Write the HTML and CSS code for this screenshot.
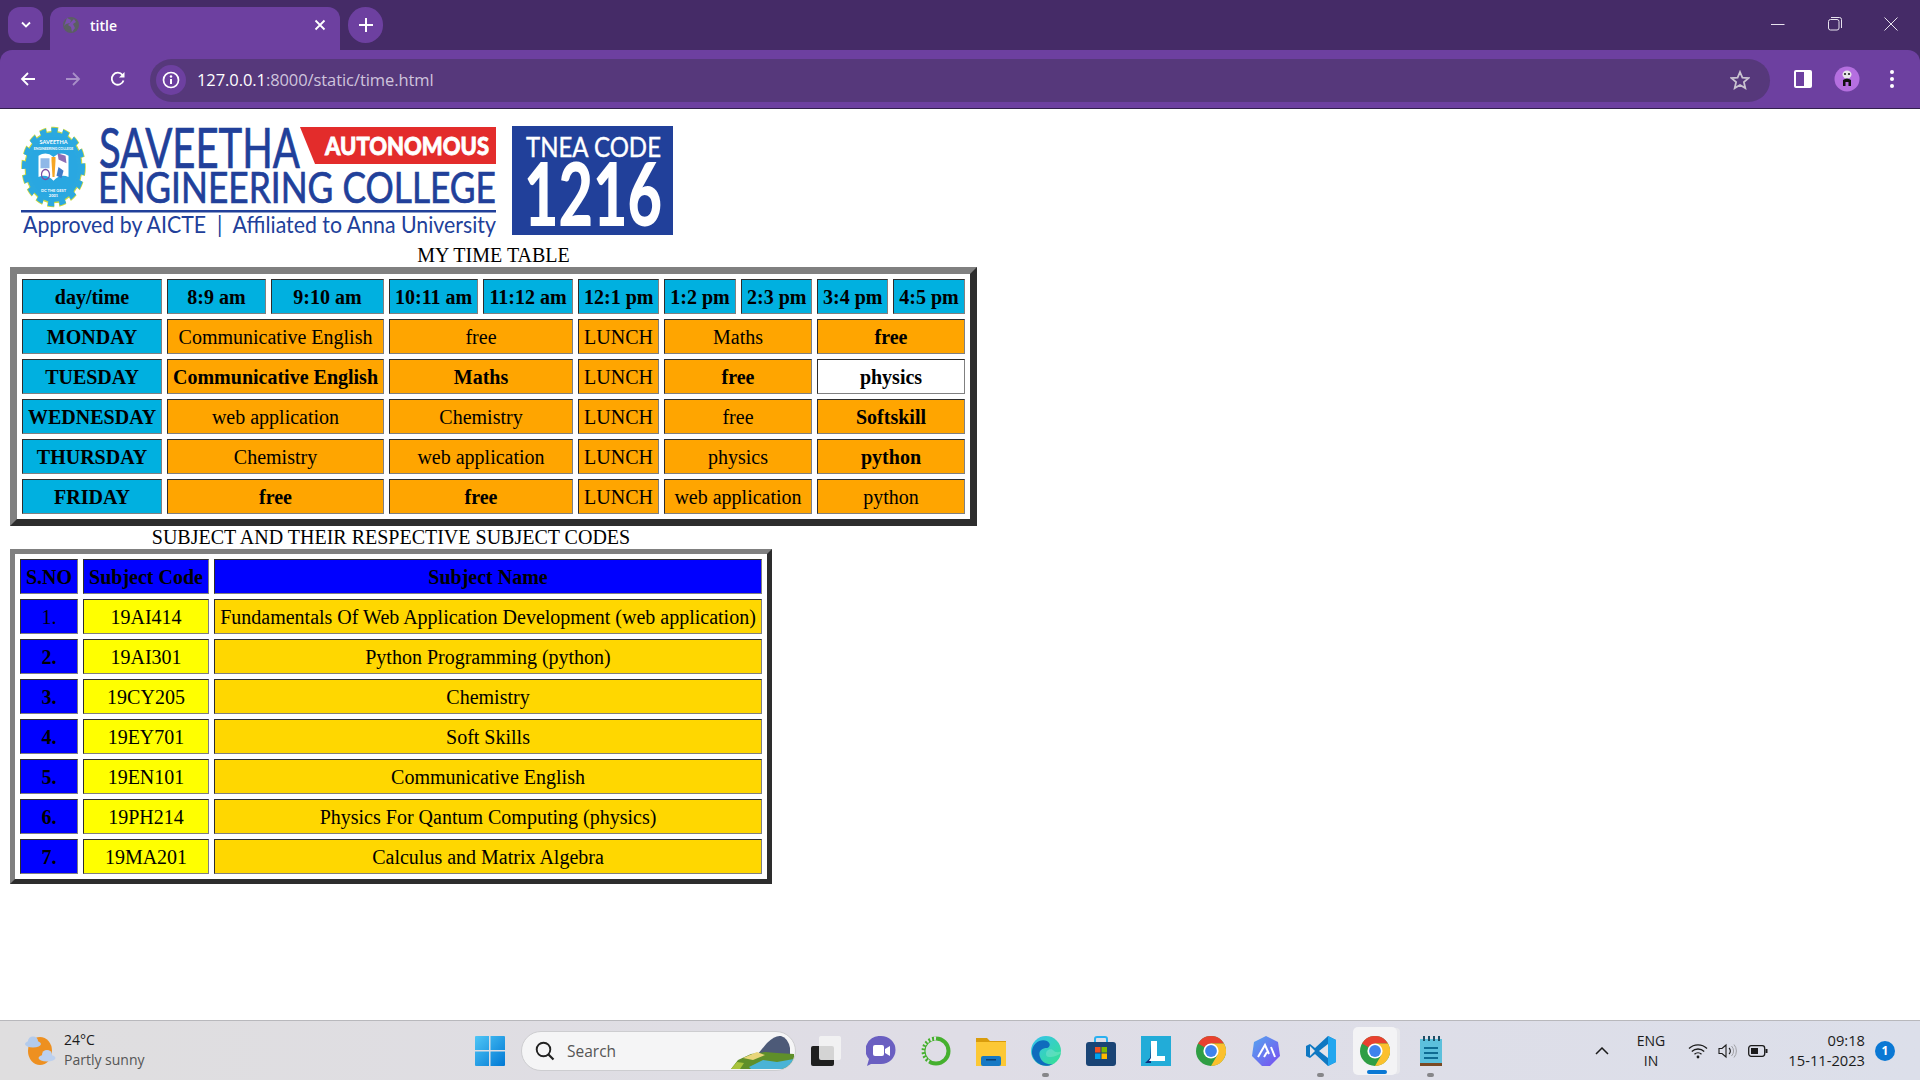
FILE: index.html
```html
<!DOCTYPE html>
<html lang="en">
<head>
<meta charset="utf-8">
<title>title</title>
<link rel="stylesheet" href="styles.css">
</head>
<body>
<svg class="defs" width="0" height="0" aria-hidden="true">
  <symbol id="chrome" viewBox="0 0 30 30">
    <circle cx="15" cy="15" r="15" fill="#2f9e44"/>
    <path d="M2 7.5A15 15 0 0 1 28 7.5L15 7.5 8.5 11.2Z" fill="#e8412f"/>
    <path d="M28 7.5A15 15 0 0 1 15 30L21.5 18.7 15 7.5Z" fill="#fbc02d"/>
    <circle cx="15" cy="15" r="7.6" fill="#fff"/>
    <circle cx="15" cy="15" r="5.9" fill="#3f82ec"/>
  </symbol>
</svg>
<div class="screen">
  <header class="browser">
    <div class="tabstrip">
      <div class="tab-search"><svg width="12" height="8" viewBox="0 0 12 8"><path d="M2 1.5l4 4 4-4" fill="none" stroke="#fff" stroke-width="1.8"/></svg></div>
      <div class="tab">
        <svg class="favicon" width="18" height="18" viewBox="0 0 18 18"><circle cx="9" cy="9" r="8" fill="#5b5e63"/><path d="M5 2l4 2-1 3-4 1-2 2M12 3l2 3-3 2 2 4-3 4-1-5-3-2" fill="#7a4fae"/></svg>
        <span class="tab-title">title</span>
        <svg class="tab-close" width="12" height="12" viewBox="0 0 12 12"><path d="M1.5 1.5l9 9M10.500 1.500l-9 9" stroke="#fff" stroke-width="1.8"/></svg>
      </div>
      <div class="new-tab"><svg width="14" height="14" viewBox="0 0 14 14"><path d="M7 0v14M0 7h14" stroke="#fff" stroke-width="2"/></svg></div>
      <div class="win-controls">
        <svg width="14" height="14" viewBox="0 0 14 14"><path d="M0 7.500h13.500" stroke="#e8e3ee" stroke-width="1"/></svg>
        <svg width="14" height="14" viewBox="0 0 14 14"><rect x=".5" y="2.500" width="10.500" height="10.500" rx="2" fill="none" stroke="#e8e3ee"/><path d="M3 .5h8.500a2 2 0 0 1 2 2V11" fill="none" stroke="#e8e3ee"/></svg>
        <svg width="14" height="14" viewBox="0 0 14 14"><path d="M.5.5l13 13M13.500.5l-13 13" stroke="#e8e3ee" stroke-width="1"/></svg>
      </div>
    </div>
    <div class="toolbar">
      <div class="nav-buttons">
        <svg width="16" height="16" viewBox="0 0 16 16"><path d="M15 8H2M8 2L2 8l6 6" fill="none" stroke="#fff" stroke-width="1.800"/></svg>
        <svg width="16" height="16" viewBox="0 0 16 16"><path d="M1 8h13M8 2l6 6-6 6" fill="none" stroke="#a98fc8" stroke-width="1.800"/></svg>
        <svg width="16" height="16" viewBox="0 0 16 16"><path d="M13.500 9.500A6 6 0 1 1 12.500 4" fill="none" stroke="#fff" stroke-width="1.800"/><path d="M14.500 1v5.500H9z" fill="#fff"/></svg>
      </div>
      <div class="omnibox">
        <span class="site-info"><svg width="18" height="18" viewBox="0 0 18 18"><circle cx="9" cy="9" r="7.500" fill="none" stroke="#fff" stroke-width="1.700"/><path d="M9 8v5" stroke="#fff" stroke-width="2"/><circle cx="9" cy="5.500" r="1.200" fill="#fff"/></svg></span>
        <span class="url"><span class="url-host">127.0.0.1</span>:8000/static/time.html</span>
        <svg class="star" width="20" height="20" viewBox="0 0 20 20"><path d="M10 2l2.400 5.600 6.100.5-4.600 4 1.400 6L10 15l-5.300 3.100 1.400-6-4.600-4 6.100-.5z" fill="none" stroke="#c9c3d0" stroke-width="1.800"/></svg>
      </div>
      <div class="tool-icons">
        <svg width="20" height="20" viewBox="0 0 20 20"><rect x="1" y="1" width="18" height="18" rx="2" fill="#fff"/><rect x="3" y="3" width="8" height="14" fill="#6d40a0"/></svg>
        <svg width="26" height="26" viewBox="0 0 26 26"><circle cx="13" cy="13" r="12.500" fill="#b56fe0"/><ellipse cx="13" cy="8.500" rx="4.500" ry="4" fill="#e8e8e8"/><circle cx="11" cy="8" r="1.100" fill="#222"/><circle cx="15" cy="8" r="1.100" fill="#222"/><path d="M9 20v-6q4-3 8 0v6h-2.500v-4h-3v4z" fill="#111"/></svg>
        <svg width="6" height="20" viewBox="0 0 6 20"><circle cx="3" cy="3" r="2" fill="#fff"/><circle cx="3" cy="10" r="2" fill="#fff"/><circle cx="3" cy="17" r="2" fill="#fff"/></svg>
      </div>
    </div>
  </header>

  <main class="page">
    <svg class="logo" width="670" height="125" viewBox="10 119 670 125" role="img" aria-label="Saveetha Engineering College">
      <g transform="translate(53.500 167) scale(1 1.250)">
        <circle r="28.500" fill="none" stroke="#c9d83f" stroke-width="7.500" stroke-dasharray="6.500 4.500"/>
        <circle r="28.500" fill="#2ba8e0" stroke="#c9d83f" stroke-width="1"/>
        <circle r="28.500" fill="none" stroke="#2ba8e0" stroke-width="6" stroke-dasharray="6 5"/>
        <circle r="24" fill="#29a7e1"/>
        <path d="M-15-9q8-4 15 1q7-5 15-1V8q-8-3-15 3q-7-6-15-3z" fill="#fff"/>
        <path d="M-13-7h9v8h-9z" fill="#8fb8e8"/>
        <circle cx="-8" cy="6" r="4" fill="none" stroke="#7b4fa3" stroke-width="1.200"/>
        <path d="M5 0l5 3-2 6-5-2z" fill="#3f79c6"/>
        <path d="M4-11l8 2 1 6-8-3z" fill="#8d6fb5"/>
        <path d="M-2-8h4v3l-1 13h-2l-1-13z" fill="#f5a623"/>
      </g>
      <text class="logo-tiny" x="53.500" y="144" text-anchor="middle" font-size="5.500">SAVEETHA</text>
      <text class="logo-tiny" x="53.500" y="150" text-anchor="middle" font-size="3.500">ENGINEERING COLLEGE</text>
      <text class="logo-tiny" x="53.500" y="192" text-anchor="middle" font-size="4">DC THE GEST</text>
      <text class="logo-tiny" x="53.500" y="197" text-anchor="middle" font-size="4">2001</text>
      <text class="logo-blue" x="99" y="168" font-size="56" textLength="201" lengthAdjust="spacingAndGlyphs">SAVEETHA</text>
      <polygon points="300,127 496,127 496,164 315,164" fill="#e32c2b"/>
      <text class="logo-auto" x="325" y="155" font-size="25" textLength="164" lengthAdjust="spacingAndGlyphs">AUTONOMOUS</text>
      <text class="logo-blue" x="98" y="203" font-size="42" textLength="398" lengthAdjust="spacingAndGlyphs">ENGINEERING COLLEGE</text>
      <rect x="21" y="210" width="475" height="2.500" fill="#21409a"/>
      <text class="logo-blue-thin" x="23" y="233" font-size="23" textLength="473" lengthAdjust="spacingAndGlyphs">Approved by AICTE  |  Affiliated to Anna University</text>
      <rect x="512" y="126" width="161" height="109" fill="#21409a"/>
      <text class="logo-white" x="526" y="157" font-size="27" textLength="135" lengthAdjust="spacingAndGlyphs">TNEA CODE</text>
      <text class="logo-white-heavy" x="524" y="226" font-size="87" textLength="138" lengthAdjust="spacingAndGlyphs">1216</text>
    </svg>

    <table class="grid timetable">
      <caption>MY TIME TABLE</caption>
      <colgroup>
        <col class="t1"><col class="t2"><col class="t3"><col class="t4"><col class="t5"><col class="t6"><col class="t7"><col class="t8"><col class="t9"><col class="t10">
      </colgroup>
      <tr class="sky-row"><th>day/time</th><th>8:9 am</th><th>9:10 am</th><th>10:11 am</th><th>11:12 am</th><th>12:1 pm</th><th>1:2 pm</th><th>2:3 pm</th><th>3:4 pm</th><th>4:5 pm</th></tr>
      <tr><th class="sky">MONDAY</th><td class="orange" colspan="2">Communicative English</td><td class="orange" colspan="2">free</td><td class="orange">LUNCH</td><td class="orange" colspan="2">Maths</td><th class="orange" colspan="2">free</th></tr>
      <tr><th class="sky">TUESDAY</th><th class="orange" colspan="2">Communicative English</th><th class="orange" colspan="2">Maths</th><td class="orange">LUNCH</td><th class="orange" colspan="2">free</th><th colspan="2">physics</th></tr>
      <tr><th class="sky">WEDNESDAY</th><td class="orange" colspan="2">web application</td><td class="orange" colspan="2">Chemistry</td><td class="orange">LUNCH</td><td class="orange" colspan="2">free</td><th class="orange" colspan="2">Softskill</th></tr>
      <tr><th class="sky">THURSDAY</th><td class="orange" colspan="2">Chemistry</td><td class="orange" colspan="2">web application</td><td class="orange">LUNCH</td><td class="orange" colspan="2">physics</td><th class="orange" colspan="2">python</th></tr>
      <tr><th class="sky">FRIDAY</th><th class="orange" colspan="2">free</th><th class="orange" colspan="2">free</th><td class="orange">LUNCH</td><td class="orange" colspan="2">web application</td><td class="orange" colspan="2">python</td></tr>
    </table>

    <table class="grid subjects">
      <caption>SUBJECT AND THEIR RESPECTIVE SUBJECT CODES</caption>
      <colgroup><col class="s1"><col class="s2"><col class="s3"></colgroup>
      <tr class="blue-row"><th>S.NO</th><th>Subject Code</th><th>Subject Name</th></tr>
      <tr><td class="blue">1.</td><td class="yellow">19AI414</td><td class="gold">Fundamentals Of Web Application Development (web application)</td></tr>
      <tr><th class="blue">2.</th><td class="yellow">19AI301</td><td class="gold">Python Programming (python)</td></tr>
      <tr><th class="blue">3.</th><td class="yellow">19CY205</td><td class="gold">Chemistry</td></tr>
      <tr><th class="blue">4.</th><td class="yellow">19EY701</td><td class="gold">Soft Skills</td></tr>
      <tr><th class="blue">5.</th><td class="yellow">19EN101</td><td class="gold">Communicative English</td></tr>
      <tr><th class="blue">6.</th><td class="yellow">19PH214</td><td class="gold">Physics For Qantum Computing (physics)</td></tr>
      <tr><th class="blue">7.</th><td class="yellow">19MA201</td><td class="gold">Calculus and Matrix Algebra</td></tr>
    </table>
  </main>

  <footer class="taskbar">
    <div class="weather">
      <svg width="34" height="30" viewBox="0 0 34 30"><ellipse cx="17" cy="15" rx="12" ry="14" fill="#ee9020"/><g fill="#b3cbec"><ellipse cx="10" cy="8" rx="8" ry="3.500"/><ellipse cx="10" cy="5" rx="5" ry="4.500"/></g><g fill="#bcd0ee"><ellipse cx="24" cy="22" rx="8.500" ry="3.500"/><ellipse cx="24" cy="18.500" rx="5" ry="4.500"/></g></svg>
      <div class="weather-text"><div class="temp">24°C</div><div class="cond">Partly sunny</div></div>
    </div>
    <div class="start">
      <svg width="30" height="30" viewBox="0 0 30 30"><defs><linearGradient id="win" x1="0" y1="0" x2="1" y2="1"><stop offset="0" stop-color="#4fc6f6"/><stop offset="1" stop-color="#0078d4"/></linearGradient></defs><path d="M0 1a1 1 0 0 1 1-1h13v14H0zM15.500 0H29a1 1 0 0 1 1 1v13H15.500zM0 15.500h14V30H1a1 1 0 0 1-1-1zM15.500 15.500H30V29a1 1 0 0 1-1 1H15.500z" fill="url(#win)"/></svg>
    </div>
    <div class="searchbox">
      <svg width="20" height="20" viewBox="0 0 20 20"><circle cx="8.500" cy="8.500" r="6.800" fill="none" stroke="#222" stroke-width="1.900"/><path d="M13.500 13.500l5 5" stroke="#222" stroke-width="2.200"/></svg>
      <span class="search-text">Search</span>
      <svg class="landscape" width="66" height="40" viewBox="0 0 66 40"><path d="M28 24L38 12q8-8 14-7 7 2 9 12v9z" fill="#4d5a78"/><path d="M2 38l7-9 13-6 14-2 12 1 17 1v15z" fill="#5f8f2a"/><path d="M14 27l14-6 8 3-12 5z" fill="#e8d57a"/><path d="M20 36l14-7 14 2 17-3v10H22z" fill="#49b3d6"/><path d="M2 38l6-7 7 1-4 6z" fill="#a9c33d"/></svg>
    </div>
    <div class="apps">
      <div class="app"><svg width="30" height="30" viewBox="0 0 30 30"><rect x="0" y="10" width="23" height="20" rx="2" fill="#1f1f1f"/><rect x="8" y="0" width="22" height="24" rx="2" fill="#f4f4f4" fill-opacity=".85"/></svg></div>
      <div class="app"><svg width="30" height="30" viewBox="0 0 30 30"><path d="M15 0a14.500 14 0 0 1 0 28H5l-4 2 2-7A14.500 14 0 0 1 15 0z" fill="#6a5fc1"/><rect x="7" y="9" width="11" height="11" rx="2" fill="#fff"/><path d="M19 13l5-3v10l-5-3z" fill="#fff"/></svg></div>
      <div class="app"><svg width="30" height="30" viewBox="0 0 30 30"><circle cx="15" cy="15" r="12.500" fill="none" stroke="#45b02e" stroke-width="4"/><path d="M15 2.500A12.500 12.500 0 0 0 8 26" fill="none" stroke="#e0e0e4" stroke-width="4" stroke-dasharray="2 2"/></svg></div>
      <div class="app"><svg width="30" height="30" viewBox="0 0 30 30"><path d="M0 2h11l3 3h16v8H0z" fill="#d99c0c"/><rect y="6" width="30" height="24" fill="#fcc835"/><rect x="5" y="20" width="20" height="10" rx="2" fill="#1679c4"/><rect x="10" y="23" width="10" height="1.500" fill="#0b3f70"/></svg></div>
      <div class="app has-dot"><svg width="30" height="30" viewBox="0 0 30 30"><defs><linearGradient id="edge" x1="0" y1="0" x2="1" y2="1"><stop offset="0" stop-color="#35c1f1"/><stop offset="1" stop-color="#36e28e"/></linearGradient></defs><circle cx="15" cy="15" r="15" fill="url(#edge)"/><path d="M1 18C0 7 10 2 16 5c5 3 2 7 0 7-6 0-9 4-7 9 2 6 8 8 13 7-9 5-19-1-21-10z" fill="#0f6cbd"/><path d="M15 18c0-5 6-6 8-3 2 2 7 1 7 0 0 4-7 6-12 6-2 0-3-1-3-3z" fill="#fff" fill-opacity=".18"/></svg></div>
      <div class="app"><svg width="30" height="30" viewBox="0 0 30 30"><path d="M9 6V3a2 2 0 0 1 2-2h8a2 2 0 0 1 2 2v3" fill="none" stroke="#2ab0f0" stroke-width="2"/><rect y="6" width="30" height="24" rx="3" fill="#1a4475"/><rect x="9" y="11" width="5.500" height="5.500" fill="#f25022"/><rect x="15.500" y="11" width="5.500" height="5.500" fill="#7fba00"/><rect x="9" y="17.500" width="5.500" height="5.500" fill="#00a4ef"/><rect x="15.500" y="17.500" width="5.500" height="5.500" fill="#ffb900"/></svg></div>
      <div class="app"><svg width="30" height="30" viewBox="0 0 30 30"><rect width="30" height="30" fill="#22acd8"/><path d="M9 8v14L4 27h6z" fill="#0d2f7a"/><path d="M10 5h6v15h8v5H8l2-3z" fill="#fff"/></svg></div>
      <div class="app"><svg width="30" height="30"><use href="#chrome"/></svg></div>
      <div class="app"><svg width="30" height="30" viewBox="0 0 30 30"><defs><linearGradient id="hex" x1="0" y1="0" x2="1" y2="1"><stop offset="0" stop-color="#54a8ef"/><stop offset="1" stop-color="#7a4cf0"/></linearGradient></defs><path d="M15 0l12 6 2 14-10 10h-8L1 20 3 6z" fill="url(#hex)"/><path d="M7 21L14 9l4 9M13 21l3-5M20 11l4 10" fill="none" stroke="#fff" stroke-width="2"/></svg></div>
      <div class="app has-dot"><svg width="30" height="30" viewBox="0 0 30 30"><path d="M22 0l8 4v22l-8 4-13-12-5 4-4-2v-10l4-2 5 4z" fill="#0f78c2"/><path d="M22 0l8 4v22l-8 4z" fill="#22a6ef"/><path d="M22 8v14l-9-7z" fill="#e4e4ea"/><path d="M4 10v10l5-5z" fill="#e4e4ea"/></svg></div>
      <div class="app active"><svg width="30" height="30"><use href="#chrome"/></svg></div>
      <div class="app has-dot"><svg width="30" height="30" viewBox="0 0 30 30"><rect y="3" x="4" width="22" height="24" fill="#5cc0dc"/><rect y="27" x="4" width="22" height="3" fill="#7b4a24"/><path d="M8 12h14M8 17h14M8 22h14" stroke="#0e6c93" stroke-width="2"/><path d="M8 0v5M13 0v5M18 0v5M23 0v5" stroke="#1a4e66" stroke-width="2"/></svg></div>
    </div>
    <div class="tray">
      <svg class="chevron" width="14" height="8" viewBox="0 0 14 8"><path d="M1 7l6-6 6 6" fill="none" stroke="#1b1b1b" stroke-width="1.500"/></svg>
      <div class="lang"><div>ENG</div><div>IN</div></div>
      <div class="status">
        <svg width="20" height="16" viewBox="0 0 20 16"><path d="M1 5.500a13 13 0 0 1 18 0M3.800 8.500a9 9 0 0 1 12.400 0M6.500 11.300a5 5 0 0 1 7 0" fill="none" stroke="#1b1b1b" stroke-width="1.300"/><circle cx="10" cy="14" r="1.400" fill="#1b1b1b"/></svg>
        <svg width="20" height="16" viewBox="0 0 20 16"><path d="M1 5.500h3l4-3.500v12l-4-3.500H1z" fill="none" stroke="#1b1b1b" stroke-width="1.100"/><path d="M11 5a4 4 0 0 1 0 6" fill="none" stroke="#1b1b1b" stroke-width="1.100"/><path d="M13.500 3a7 7 0 0 1 0 10M16 1.500a10 10 0 0 1 0 13" fill="none" stroke="#a0a0a5" stroke-width="1"/></svg>
        <svg width="20" height="14" viewBox="0 0 20 14"><rect x=".7" y="1.700" width="16" height="10.600" rx="2.500" fill="none" stroke="#1b1b1b" stroke-width="1.300"/><rect x="3" y="4" width="7" height="6" fill="#1b1b1b"/><rect x="17.500" y="5" width="2" height="4" fill="#1b1b1b"/></svg>
      </div>
      <div class="clock"><div>09:18</div><div>15-11-2023</div></div>
      <div class="badge">1</div>
    </div>
  </footer>
</div>
</body>
</html>
```
FILE: styles.css
```css
* { box-sizing: border-box; }
html, body { margin: 0; padding: 0; }
body { font-family: "Liberation Serif", serif; background: #fff; color: #000; }
.defs { position: absolute; }
.screen { width: 1920px; height: 1080px; display: flex; flex-direction: column; overflow: hidden; }

/* Browser chrome */
.browser { height: 109px; flex: none; background: #452b67; font-family: "Open Sans", sans-serif; }
.tabstrip { height: 50px; display: flex; align-items: flex-start; padding: 7px 0 0 8px; }
.tab-search { width: 35px; height: 36px; border-radius: 12px; background: #6d40a0; display: flex; align-items: center; justify-content: center; }
.tab { width: 290px; height: 43px; margin-left: 7px; padding: 0 14px 7px 12px; border-radius: 12px 12px 0 0; background: #6d40a0; display: flex; align-items: center; }
.tab-title { margin-left: 10px; font-size: 14px; font-weight: 600; color: #fff; flex: 1; }
.new-tab { width: 35px; height: 36px; margin-left: 8px; border-radius: 18px; background: #6d40a0; display: flex; align-items: center; justify-content: center; }
.win-controls { margin-left: auto; width: 160px; display: flex; justify-content: space-between; padding: 10px 22px 0 11px; }
.toolbar { height: 59px; padding: 8px 0 6px 0; background: #6d40a0; border-radius: 12px 12px 0 0; border-bottom: 1px solid #33204d; display: flex; align-items: center; position: relative; }
.nav-buttons { width: 150px; display: flex; gap: 29px; padding: 0 0 2px 20px; }
.omnibox { width: 1620px; height: 43px; border-radius: 22px; background: #56387b; display: flex; align-items: center; padding: 0 20px 0 6px; }
.site-info { width: 30px; height: 30px; border-radius: 50%; background: #6d40a0; display: flex; align-items: center; justify-content: center; }
.url { margin-left: 11px; padding-bottom: 2px; font-size: 16.500px; letter-spacing: -.08px; color: #cfc4dd; flex: 1; white-space: nowrap; }
.url-host { color: #fff; }
.tool-icons { width: 150px; display: flex; align-items: center; padding: 0 0 2px 23px; gap: 21px; }
.tool-icons svg:last-child { margin-left: 8px; }

/* Page */
.page { flex: 1; padding: 10px; min-height: 0; }
.logo { display: block; }
.grid { border-collapse: separate; border-spacing: 5px; table-layout: fixed; border-style: solid; border-color: #808080 #2d2d2d #2d2d2d #808080; font-size: 20px; }
.grid caption { line-height: 23px; }
.grid th, .grid td { height: 35px; padding: 6px 5px 4px; border: 1px solid; border-color: #2d2d2d #808080 #808080 #2d2d2d; text-align: center; white-space: nowrap; }
.timetable { width: 967px; border-width: 7px; }
.subjects { width: 762px; border-width: 5px; }
.t1 { width: 140px; } .t2 { width: 99px; } .t3 { width: 113px; } .t4 { width: 89px; } .t5 { width: 90px; }
.t6 { width: 81px; } .t7 { width: 72px; } .t8 { width: 71px; } .t9 { width: 71px; } .t10 { width: 72px; }
.s1 { width: 58px; } .s2 { width: 126px; } .s3 { width: 548px; }
.grid .sky, .sky-row th { background: #00b0e0; }
.grid .orange { background: #ffa500; }
.grid .blue, .blue-row th { background: #0000ff; }
.grid .yellow { background: #ffff00; }
.grid .gold { background: #ffd700; }

/* Logo text */
.logo-blue { font-family: "Lato", sans-serif; font-weight: 400; fill: #21409a; stroke: #21409a; stroke-width: .7px; }
.logo-blue-thin { font-family: "Lato", sans-serif; font-weight: 400; fill: #21409a; white-space: pre; }
.logo-white { font-family: "Lato", sans-serif; font-weight: 400; fill: #fff; stroke: #fff; stroke-width: .4px; }
.logo-auto { font-family: "Lato", sans-serif; font-weight: 900; fill: #fff; stroke: #fff; stroke-width: .8px; }
.logo-white-heavy { font-family: "Lato", sans-serif; font-weight: 900; fill: #fff; }
.logo-tiny { font-family: "Lato", sans-serif; font-weight: 700; fill: #fff; }

/* Taskbar */
.taskbar { height: 60px; flex: none; display: flex; align-items: center; border-top: 1px solid #b8b8bc; background: linear-gradient(90deg, #dfdedf, #dfdde6 50%, #dcdfea); font-family: "Open Sans", sans-serif; color: #1b1b1b; position: relative; }
.weather { width: 462px; padding-left: 23px; display: flex; align-items: center; gap: 7px; }
.weather-text { font-size: 14px; line-height: 20px; padding-bottom: 2px; }
.temp { color: #1b1b1b; font-size: 14px; }
.cond { color: #555; font-size: 14px; }
.start { width: 56px; display: flex; justify-content: center; }
.searchbox { width: 275px; height: 40px; margin-left: 3px; padding-left: 13px; border-radius: 20px; background: #f5f5f6; border: 1px solid #cdcdd0; display: flex; align-items: center; overflow: hidden; }
.search-text { margin-left: 12px; font-size: 15.500px; color: #555; }
.landscape { margin-left: auto; flex: none; }
.apps { display: flex; margin-left: 2px; }
.app { width: 55px; height: 48px; display: flex; align-items: center; justify-content: center; position: relative; }
.has-dot::after { content: ""; position: absolute; bottom: -2px; left: 24px; width: 7px; height: 4px; border-radius: 2px; background: #868689; }
.active { background: #f3f3f5; border-radius: 5px; box-shadow: 4px 0 0 -1px #e8e8ec; width: 44px; margin: 0 6px 0 5px; }
.active::after { content: ""; position: absolute; bottom: 1px; left: 14px; width: 20px; height: 4px; border-radius: 2px; background: #0a78d4; }
.tray { margin-left: auto; height: 100%; display: flex; align-items: center; padding-right: 25px; }
.chevron { margin-right: 27px; }
.lang { width: 30px; text-align: center; font-size: 14px; line-height: 20px; }
.status { display: flex; align-items: center; gap: 10px; margin-left: 22px; }
.clock { margin-left: 20px; width: 77px; font-size: 14.700px; line-height: 20px; padding-bottom: 2px; text-align: right; white-space: nowrap; }
.badge { width: 20px; height: 20px; margin-left: 10px; border-radius: 50%; background: #0a78d4; color: #fff; font-size: 12px; font-weight: 700; display: flex; align-items: center; justify-content: center; }
```
